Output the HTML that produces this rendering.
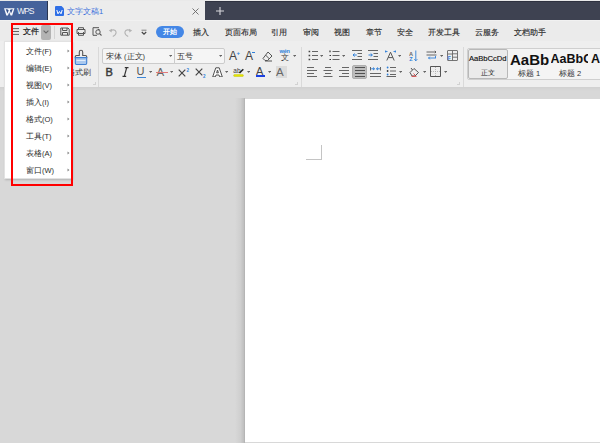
<!DOCTYPE html>
<html><head><meta charset="utf-8">
<style>
*{margin:0;padding:0;box-sizing:border-box}
html,body{width:600px;height:443px;overflow:hidden;background:#d8d8d8;font-family:"Liberation Sans",sans-serif;color:#333}
.a{position:absolute}
.t{position:absolute;white-space:nowrap;line-height:1}
.k{-webkit-text-stroke:0.15px currentColor}
</style></head><body>
<!-- title bar -->
<div class="a" style="left:0;top:0;width:600px;height:1px;background:#e9e9e9"></div>
<div class="a" style="left:0;top:1px;width:47px;height:19px;background:#45629b"></div>
<div class="a" style="left:47px;top:1px;width:158px;height:19px;background:#ececec"></div>
<div class="a" style="left:47px;top:1px;width:1px;height:19px;background:#2a3550"></div>
<div class="a" style="left:48px;top:1px;width:2px;height:19px;background:#f6f6f6"></div>
<div class="a" style="left:0;top:20px;width:600px;height:1px;background:#f1f1f1"></div>
<div class="a" style="left:205px;top:1px;width:395px;height:19px;background:#3e4251;border-top:1px solid #2f3240"></div>
<svg class="a" style="left:4px;top:7.5px" width="11" height="8" viewBox="0 0 11 8"><path d="M0 0.3H10.5L8.2 7.5H6.6L5.25 4.3L3.9 7.5H2.3Z" fill="#f4f6fb"/><path d="M1.7 1.3Q3.8 0.9 4.7 2.3L3.5 5.6Z M8.8 1.3Q6.7 0.9 5.8 2.3L7 5.6Z" fill="#36528c"/></svg>
<div class="t" style="left:17px;top:7.3px;font-size:8.6px;color:#f2f4f8;letter-spacing:-1px">WPS</div>
<svg class="a" style="left:55px;top:6px" width="9" height="10" viewBox="0 0 9 10"><path d="M1 0H6.5L9 2.5V9A1 1 0 0 1 8 10H1A1 1 0 0 1 0 9V1A1 1 0 0 1 1 0Z" fill="#2f6fe6"/><path d="M1.8 4L3 7.8L4.5 5.5L6 7.8L7.2 4" stroke="#fff" stroke-width="1" fill="none"/></svg>
<div class="t" style="left:67px;top:8px;font-size:7.6px;color:#376fdc">文字文稿1</div>
<svg class="a" style="left:192px;top:8px" width="7" height="7" viewBox="0 0 7 7"><path d="M0.5 0.5 L6.5 6.5 M6.5 0.5 L0.5 6.5" stroke="#666" stroke-width="0.9"/></svg>
<svg class="a" style="left:216px;top:7px" width="8" height="8" viewBox="0 0 8 8"><path d="M4 0 V8 M0 4 H8" stroke="#d8d8dc" stroke-width="1.1"/></svg>

<!-- ribbon tabs row -->
<div class="a" style="left:0;top:21px;width:600px;height:20px;background:#ebebeb"></div>
<!-- toolbar -->
<div class="a" style="left:0;top:41px;width:600px;height:46px;background:#eeeeee"></div>
<div class="a" style="left:0;top:87px;width:600px;height:4px;background:linear-gradient(#d0d0d0,#d8d8d8)"></div>


<!-- ribbon tab contents -->
<svg class="a" style="left:12px;top:28px" width="7" height="7" viewBox="0 0 7 7"><path d="M0 0.6H7M0 3.5H7M0 6.4H7" stroke="#555" stroke-width="0.9"/></svg>
<div class="t" style="left:22.5px;top:28.3px;font-size:7.8px;color:#1a1a1a;-webkit-text-stroke:0.2px #1a1a1a">文件</div>
<div class="a" style="left:41px;top:25px;width:10px;height:14.5px;background:#b3b3b3;border-radius:2px"></div>
<svg class="a" style="left:43px;top:30px" width="6" height="4" viewBox="0 0 6 4"><path d="M0.6 0.6L3 3L5.4 0.6" stroke="#6a6a6a" stroke-width="1.1" fill="none"/></svg>
<div class="a" style="left:54px;top:26px;width:1px;height:13px;background:#d4d4d4"></div>
<svg class="a" style="left:60px;top:27px" width="10" height="9" viewBox="0 0 10 9"><path d="M1 1H8L9.2 2.2V8.2H0.8V1Z M2.5 1V3.5H7V1 M2.5 8V5.5H7.5V8" stroke="#555" stroke-width="1" fill="none"/></svg>
<svg class="a" style="left:76px;top:27px" width="10" height="9" viewBox="0 0 10 9"><path d="M2.5 2.5V0.7H7.5V2.5 M1 2.5H9V6.5H1Z M2.5 5V8.3H7.5V5" stroke="#555" stroke-width="1" fill="none"/></svg>
<svg class="a" style="left:92px;top:27px" width="10" height="9" viewBox="0 0 10 9"><path d="M7 0.7H1V8.3H5 M6 2.5H7.5" stroke="#555" stroke-width="1" fill="none"/><circle cx="6" cy="5" r="2.2" stroke="#555" stroke-width="1" fill="none"/><path d="M7.6 6.6L9.5 8.5" stroke="#555" stroke-width="1.1"/></svg>
<svg class="a" style="left:108px;top:28px" width="10" height="9" viewBox="0 0 10 9"><path d="M2.5 2.8C4 1.5 7.5 1.3 8 3.8C8.4 5.8 6.8 7.6 4.8 8.5" stroke="#b4b4b4" stroke-width="1.1" fill="none"/><path d="M0.8 2.5L4 0.8L3.6 4.6Z" fill="#b4b4b4"/></svg>
<svg class="a" style="left:123px;top:28px" width="10" height="9" viewBox="0 0 10 9"><g transform="translate(10 0) scale(-1 1)"><path d="M2.5 2.8C4 1.5 7.5 1.3 8 3.8C8.4 5.8 6.8 7.6 4.8 8.5" stroke="#b4b4b4" stroke-width="1.1" fill="none"/><path d="M0.8 2.5L4 0.8L3.6 4.6Z" fill="#b4b4b4"/></g></svg>
<svg class="a" style="left:140px;top:29px" width="8" height="7" viewBox="0 0 8 7"><path d="M1.5 1.2H6.5" stroke="#777" stroke-width="0.9"/><path d="M1.8 3L4 5.2L6.2 3" stroke="#444" stroke-width="1.2" fill="none"/></svg>
<div class="a" style="left:156px;top:25.5px;width:28px;height:12.5px;background:#4487e6;border-radius:6.5px"></div>
<div class="t" style="left:162.8px;top:28.2px;font-size:7.4px;color:#fff;font-weight:bold">开始</div>
<div class="t k" style="left:193px;top:28.5px;font-size:8px;color:#2b2b2b">插入</div>
<div class="t k" style="left:225px;top:28.5px;font-size:8px;color:#2b2b2b">页面布局</div>
<div class="t k" style="left:271px;top:28.5px;font-size:8px;color:#2b2b2b">引用</div>
<div class="t k" style="left:303px;top:28.5px;font-size:8px;color:#2b2b2b">审阅</div>
<div class="t k" style="left:334px;top:28.5px;font-size:8px;color:#2b2b2b">视图</div>
<div class="t k" style="left:366px;top:28.5px;font-size:8px;color:#2b2b2b">章节</div>
<div class="t k" style="left:397px;top:28.5px;font-size:8px;color:#2b2b2b">安全</div>
<div class="t k" style="left:428px;top:28.5px;font-size:8px;color:#2b2b2b">开发工具</div>
<div class="t k" style="left:475px;top:28.5px;font-size:8px;color:#2b2b2b">云服务</div>
<div class="t k" style="left:514px;top:28.5px;font-size:8px;color:#2b2b2b">文档助手</div>


<!-- toolbar: clipboard -->
<svg class="a" style="left:74px;top:49px" width="14" height="17" viewBox="0 0 14 17"><path d="M5.3 6.5V3A1.7 1.7 0 0 1 8.7 3V6.5H11.5A1.2 1.2 0 0 1 12.7 7.7V8.6H1.3V7.7A1.2 1.2 0 0 1 2.5 6.5Z" stroke="#555" stroke-width="1.1" fill="none"/><path d="M1.3 8.6H12.7V14.3A1.2 1.2 0 0 1 11.5 15.5H2.5A1.2 1.2 0 0 1 1.3 14.3Z" fill="#a9c8ee" stroke="#3f7fd0" stroke-width="1.1"/><path d="M2.5 11.5H11.5" stroke="#e8f0fb" stroke-width="0.9"/></svg>
<div class="t" style="left:67px;top:69px;font-size:8px;color:#333">格式刷</div>
<div class="a" style="left:98px;top:47px;width:1px;height:40px;background:#d9d9d9"></div>
<div class="a" style="left:93px;top:82px;width:3px;height:3px;border-right:1px solid #d2d2d2;border-bottom:1px solid #d2d2d2"></div>
<!-- font group -->
<div class="a" style="left:102px;top:48px;width:73px;height:16px;border:1px solid #cbcbcb;border-radius:2px 0 0 2px;background:#f5f5f5"></div>
<div class="a" style="left:174px;top:48px;width:51px;height:16px;border:1px solid #cbcbcb;border-radius:0 2px 2px 0;background:#f5f5f5"></div>
<div class="t" style="left:106px;top:53px;font-size:7.5px;color:#333">宋体 (正文)</div>
<div class="t" style="left:177px;top:53px;font-size:7.8px;color:#333">五号</div>
<svg class="a" style="left:169px;top:55px" width="3.2" height="2.4" viewBox="0 0 4 3"><path d="M0 0H4L2 2.5Z" fill="#666"/></svg>
<svg class="a" style="left:219px;top:55px" width="3.2" height="2.4" viewBox="0 0 4 3"><path d="M0 0H4L2 2.5Z" fill="#666"/></svg>
<div class="t" style="left:229px;top:50px;font-size:12px;color:#444">A</div>
<div class="t" style="left:236.5px;top:49.5px;font-size:6px;color:#2f7fd8;font-weight:bold">+</div>
<div class="t" style="left:245px;top:50px;font-size:12px;color:#444">A</div>
<div class="a" style="left:252px;top:52px;width:3px;height:1px;background:#2f7fd8"></div>
<svg class="a" style="left:262px;top:51px" width="11" height="11" viewBox="0 0 11 11"><path d="M6 1L10 5L5.5 9.5H3L1 7.5Z M3.5 4L7.5 8 M3 10H10" stroke="#555" stroke-width="1" fill="none"/></svg>
<div class="t" style="left:280.5px;top:53.5px;font-size:7.8px;color:#3a3a3a">文</div>
<div class="t" style="left:279.5px;top:49px;font-size:5.6px;color:#2f7fd8;font-weight:bold;letter-spacing:-0.2px">wén</div>
<svg class="a" style="left:293px;top:55px" width="3.2" height="2.4" viewBox="0 0 4 3"><path d="M0 0H4L2 2.5Z" fill="#666"/></svg>
<!-- row2 -->
<div class="t" style="left:105.5px;top:66.5px;font-size:11px;color:#3a3a3a;-webkit-text-stroke:0.45px #3a3a3a">B</div>
<svg class="a" style="left:122px;top:67px" width="7" height="10" viewBox="0 0 7 10"><path d="M2.8 0.7H6.5M0.5 9.3H4.2M4.7 0.7L2.3 9.3" stroke="#333" stroke-width="1.2" fill="none"/></svg>
<div class="t" style="left:136.5px;top:66px;font-size:11px;color:#555">U</div>
<div class="a" style="left:137px;top:76.5px;width:9px;height:1px;background:#3c86d8"></div>
<svg class="a" style="left:149px;top:71px" width="3.2" height="2.4" viewBox="0 0 4 3"><path d="M0 0H4L2 2.5Z" fill="#666"/></svg>
<div class="t" style="left:156.5px;top:66.5px;font-size:11.5px;color:#666">A</div>
<div class="a" style="left:156px;top:72px;width:12px;height:1px;background:#e27a7a"></div>
<svg class="a" style="left:170px;top:71px" width="3.2" height="2.4" viewBox="0 0 4 3"><path d="M0 0H4L2 2.5Z" fill="#666"/></svg>
<svg class="a" style="left:178px;top:68px" width="12" height="9" viewBox="0 0 12 9"><path d="M0.7 1.7L7.3 8.3M7.3 1.7L0.7 8.3" stroke="#444" stroke-width="1.2"/><text x="8.5" y="4" font-size="4.5" fill="#2f7fd8" font-family="Liberation Sans" font-weight="bold">2</text></svg>
<svg class="a" style="left:195px;top:68px" width="12" height="10" viewBox="0 0 12 10"><path d="M0.7 0.7L7.3 7.3M7.3 0.7L0.7 7.3" stroke="#444" stroke-width="1.2"/><text x="8" y="9.5" font-size="4.5" fill="#2f7fd8" font-family="Liberation Sans" font-weight="bold">2</text></svg>
<svg class="a" style="left:212px;top:66.5px" width="11" height="10.5" viewBox="0 0 11 10.5"><path d="M0.7 9.8L3.8 0.8H7.2L10.3 9.8H7.6L7 8H4L3.4 9.8Z M4.6 5.8H6.4L5.5 3Z" fill="#fafafa" fill-rule="evenodd" stroke="#505050" stroke-width="1" stroke-linejoin="round"/></svg>
<svg class="a" style="left:225px;top:71px" width="3.2" height="2.4" viewBox="0 0 4 3"><path d="M0 0H4L2 2.5Z" fill="#666"/></svg>
<svg class="a" style="left:233px;top:66px" width="11" height="11" viewBox="0 0 11 11"><text x="0.3" y="7.3" font-size="6.5" fill="#3a3a3a" font-family="Liberation Sans">ab</text><path d="M6.5 7L10.3 3.2" stroke="#222" stroke-width="1.6"/><rect x="0.6" y="8.6" width="9.8" height="1.9" rx="0.9" fill="#e6e600" stroke="#b8b800" stroke-width="0.4"/></svg>
<svg class="a" style="left:247px;top:71px" width="3.2" height="2.4" viewBox="0 0 4 3"><path d="M0 0H4L2 2.5Z" fill="#666"/></svg>
<div class="t" style="left:256px;top:66px;font-size:11px;color:#444">A</div>
<div class="a" style="left:256px;top:75px;width:9px;height:2px;background:#1a3fe0"></div>
<svg class="a" style="left:268px;top:71px" width="3.2" height="2.4" viewBox="0 0 4 3"><path d="M0 0H4L2 2.5Z" fill="#666"/></svg>
<div class="a" style="left:275.5px;top:66px;width:11px;height:11.5px;background:#dcdcdc"></div>
<div class="t" style="left:276px;top:66.5px;font-size:11.5px;color:#666">A</div>
<div class="a" style="left:301px;top:47px;width:1px;height:40px;background:#d9d9d9"></div>
<div class="a" style="left:295px;top:82px;width:3px;height:3px;border-right:1px solid #d2d2d2;border-bottom:1px solid #d2d2d2"></div>


<!-- paragraph group -->
<svg class="a" style="left:307.5px;top:50px" width="11" height="11" viewBox="0 0 11 11"><path d="M0.6 1.5H2.2M0.6 5.5H2.2M0.6 9.5H2.2" stroke="#444" stroke-width="1.5"/><path d="M4 1.5H10M4 5.5H10M4 9.5H10" stroke="#555" stroke-width="0.9"/></svg>
<svg class="a" style="left:320px;top:55px" width="3.2" height="2.4" viewBox="0 0 4 3"><path d="M0 0H4L2 2.5Z" fill="#666"/></svg>
<svg class="a" style="left:329px;top:50px" width="11" height="11" viewBox="0 0 11 11"><path d="M1 0.5V2.3M0.5 5.5H2M0.5 9.5H2" stroke="#333" stroke-width="1.2"/><path d="M3.5 1.5H10.5M3.5 5.5H10.5M3.5 9.5H10.5" stroke="#555" stroke-width="0.9"/></svg>
<svg class="a" style="left:342px;top:55px" width="3.2" height="2.4" viewBox="0 0 4 3"><path d="M0 0H4L2 2.5Z" fill="#666"/></svg>
<svg class="a" style="left:352px;top:50px" width="10" height="11" viewBox="0 0 10 11"><path d="M0 0.5H10M5.5 3.5H10M5.5 6.5H10M0 9.5H10" stroke="#555" stroke-width="0.9"/><path d="M4.8 5H1M2.6 3.5L1 5L2.6 6.5" stroke="#2f7fd8" stroke-width="1" fill="none"/></svg>
<svg class="a" style="left:368px;top:50px" width="10" height="11" viewBox="0 0 10 11"><path d="M0 0.5H10M5.5 3.5H10M5.5 6.5H10M0 9.5H10" stroke="#555" stroke-width="0.9"/><path d="M0.5 5H4.3M2.7 3.5L4.3 5L2.7 6.5" stroke="#2f7fd8" stroke-width="1" fill="none"/></svg>
<svg class="a" style="left:384px;top:50px" width="13" height="11" viewBox="0 0 13 11"><path d="M2.8 10.5L6.5 2.2L10.2 10.5M4.2 7.6H8.8" stroke="#555" stroke-width="1" fill="none"/><path d="M1 1.5H3.5M2.2 0.4L1 1.5L2.2 2.6M12 1.5H9.5M10.8 0.4L12 1.5L10.8 2.6" stroke="#2f7fd8" stroke-width="0.9" fill="none"/></svg>
<svg class="a" style="left:398px;top:55px" width="3.2" height="2.4" viewBox="0 0 4 3"><path d="M0 0H4L2 2.5Z" fill="#666"/></svg>
<svg class="a" style="left:409px;top:50px" width="10" height="12" viewBox="0 0 10 12"><text x="0" y="5.6" font-size="5.6" fill="#666" font-family="Liberation Sans" font-weight="bold">A</text><text x="0.2" y="11" font-size="5.6" fill="#2f7fd8" font-family="Liberation Sans" font-weight="bold">Z</text><path d="M6.8 0.5V10.8 M5.3 9.2L6.8 10.8L8.3 9.2" stroke="#2f7fd8" stroke-width="0.9" fill="none"/></svg>
<svg class="a" style="left:426px;top:50px" width="11" height="11" viewBox="0 0 11 11"><path d="M0.5 2H8M0.5 5H10.5" stroke="#555" stroke-width="0.9"/><path d="M8 2H10M8.8 0.8L10 2L8.8 3.2" stroke="#555" stroke-width="0.9" fill="none"/><path d="M10 8H2.5M3.8 6.7L2.5 8L3.8 9.3 M9.5 8V6" stroke="#2f7fd8" stroke-width="0.9" fill="none"/></svg>
<svg class="a" style="left:440px;top:55px" width="3.2" height="2.4" viewBox="0 0 4 3"><path d="M0 0H4L2 2.5Z" fill="#666"/></svg>
<svg class="a" style="left:447px;top:50px" width="11" height="11" viewBox="0 0 11 11"><path d="M1 0.5H10A0.5 0.5 0 0 1 10.5 1V10A0.5 0.5 0 0 1 10 10.5H1A0.5 0.5 0 0 1 0.5 10V1A0.5 0.5 0 0 1 1 0.5Z M5.5 0.5V10.5 M5.5 3.8H10.5 M5.5 7.2H10.5 M0.5 4H5.5" stroke="#666" stroke-width="0.9" fill="none"/><text x="0.8" y="10" font-size="5" fill="#2f7fd8" font-family="Liberation Sans" font-weight="bold">F</text></svg>
<!-- row 2 -->
<svg class="a" style="left:307px;top:67px" width="11" height="10" viewBox="0 0 11 10"><path d="M0 0.5H7M0 3.5H10M0 6.5H7M0 9.5H10" stroke="#555" stroke-width="0.9"/></svg>
<svg class="a" style="left:323px;top:67px" width="11" height="10" viewBox="0 0 11 10"><path d="M2 0.5H8M0.5 3.5H9.5M2 6.5H8M0.5 9.5H9.5" stroke="#555" stroke-width="0.9"/></svg>
<svg class="a" style="left:339px;top:67px" width="11" height="10" viewBox="0 0 11 10"><path d="M3 0.5H10M0 3.5H10M3 6.5H10M0 9.5H10" stroke="#555" stroke-width="0.9"/></svg>
<div class="a" style="left:352px;top:64.5px;width:15px;height:14.5px;background:#bcbcbc;border-radius:2px;border:1px solid #adadad"></div>
<svg class="a" style="left:354.5px;top:67px" width="10" height="10" viewBox="0 0 10 10"><path d="M0 0.5H10M0 3.5H10M0 6.5H10M0 9.5H10" stroke="#444" stroke-width="0.9"/></svg>
<svg class="a" style="left:370px;top:66.5px" width="11" height="10" viewBox="0 0 11 10"><path d="M0.5 0V3.5M10.5 0V3.5" stroke="#555" stroke-width="0.9"/><path d="M0 6.5H11M0 9.5H11" stroke="#555" stroke-width="0.9"/><path d="M1.2 1.8H4.5M3 0.5L4.5 1.8L3 3.1 M9.8 1.8H6.5M8 0.5L6.5 1.8L8 3.1" stroke="#2f7fd8" stroke-width="1" fill="none"/></svg>
<svg class="a" style="left:386px;top:66px" width="11" height="11" viewBox="0 0 11 11"><path d="M4 1.5H10M4 5H10M4 8.5H10 M0.5 10.5H10" stroke="#555" stroke-width="0.9"/><circle cx="1.6" cy="1.5" r="0.9" fill="#2f7fd8"/><circle cx="1.6" cy="5" r="0.9" fill="#333"/><circle cx="1.6" cy="8.5" r="0.9" fill="#2f7fd8"/></svg>
<svg class="a" style="left:399px;top:71px" width="3.2" height="2.4" viewBox="0 0 4 3"><path d="M0 0H4L2 2.5Z" fill="#666"/></svg>
<svg class="a" style="left:408.5px;top:66.5px" width="11" height="10" viewBox="0 0 11 10"><path d="M1 5.5L5 1.5L9.5 5.5L6 9H3Z" stroke="#555" stroke-width="1" fill="none" stroke-linejoin="round"/><path d="M3.5 3L2 1" stroke="#555" stroke-width="1"/><path d="M2.5 9.3H7.5" stroke="#e04848" stroke-width="1"/><path d="M4.5 6.5L6 8" stroke="#e04848" stroke-width="0.9"/></svg>
<svg class="a" style="left:423px;top:71px" width="3.2" height="2.4" viewBox="0 0 4 3"><path d="M0 0H4L2 2.5Z" fill="#666"/></svg>
<svg class="a" style="left:430px;top:66px" width="11" height="11" viewBox="0 0 11 11"><path d="M0.5 0.5H10.5V10.5H0.5Z" stroke="#555" stroke-width="1" fill="none"/><path d="M5.5 1V10M1 5.5H10" stroke="#aaa" stroke-width="0.8" stroke-dasharray="1 1"/></svg>
<svg class="a" style="left:444px;top:71px" width="3.2" height="2.4" viewBox="0 0 4 3"><path d="M0 0H4L2 2.5Z" fill="#666"/></svg>
<div class="a" style="left:463px;top:47px;width:1px;height:40px;background:#d9d9d9"></div>
<div class="a" style="left:457px;top:82px;width:3px;height:3px;border-right:1px solid #d2d2d2;border-bottom:1px solid #d2d2d2"></div>
<!-- styles -->
<div class="a" style="left:467px;top:48px;width:140px;height:32px;border:1px solid #cfcfcf;border-radius:2px;background:#f4f4f4"></div>
<div class="a" style="left:468px;top:49px;width:39.5px;height:29.5px;border:1px solid #b8b8b8;border-radius:2px;background:#ebebeb"></div>
<div class="t" style="left:469px;top:55px;font-size:7.6px;color:#111;-webkit-text-stroke:0.15px #111">AaBbCcDd</div>
<div class="t" style="left:480.5px;top:69.3px;font-size:7.4px;color:#222">正文</div>
<div class="t" style="left:510px;top:52px;font-size:15px;color:#111;font-weight:bold">AaBb</div>
<div class="t" style="left:518px;top:69.5px;font-size:7.5px;color:#333">标题 1</div>
<div style="position:absolute;left:550.5px;top:52.5px;width:37px;height:14px;overflow:hidden"><div class="t" style="left:0;top:0;font-size:12.5px;color:#111;font-weight:bold">AaBbC</div></div>
<div class="t" style="left:559px;top:69.5px;font-size:7.5px;color:#333">标题 2</div>
<div class="t" style="left:591px;top:52.5px;font-size:12.5px;color:#111;font-weight:bold">A</div>

<!-- doc page -->
<div class="a" style="left:235px;top:98px;width:10px;height:345px;background:linear-gradient(to right,rgba(0,0,0,0),rgba(0,0,0,0.045) 55%,rgba(0,0,0,0.11) 85%,rgba(0,0,0,0.19))"></div>
<div class="a" style="left:245px;top:98.5px;width:355px;height:343px;background:#fff"></div>
<div class="a" style="left:306px;top:145px;width:16px;height:15px;border-right:1px solid #c4c4c4;border-bottom:1px solid #c4c4c4"></div>


<!-- menu -->
<div class="a" style="left:4px;top:41px;width:68px;height:138px;background:#fff;border:1px solid #e2e2e2;box-shadow:1px 1px 2px rgba(0,0,0,0.18)"></div>
<div class="t" style="left:26px;top:47.8px;font-size:7.5px;color:#2a2a2a">文件(F)</div>
<div class="t" style="left:26px;top:64.8px;font-size:7.5px;color:#2a2a2a">编辑(E)</div>
<div class="t" style="left:26px;top:81.8px;font-size:7.5px;color:#2a2a2a">视图(V)</div>
<div class="t" style="left:26px;top:98.8px;font-size:7.5px;color:#2a2a2a">插入(I)</div>
<div class="t" style="left:26px;top:115.8px;font-size:7.5px;color:#2a2a2a">格式(O)</div>
<div class="t" style="left:26px;top:132.8px;font-size:7.5px;color:#2a2a2a">工具(T)</div>
<div class="t" style="left:26px;top:149.8px;font-size:7.5px;color:#2a2a2a">表格(A)</div>
<div class="t" style="left:26px;top:166.8px;font-size:7.5px;color:#2a2a2a">窗口(W)</div>
<svg class="a" style="left:67px;top:49px" width="3" height="124" viewBox="0 0 3 124"><path d="M0.5 0.5L2.5 2L0.5 3.5Z M0.5 17.5L2.5 19L0.5 20.5Z M0.5 34.5L2.5 36L0.5 37.5Z M0.5 51.5L2.5 53L0.5 54.5Z M0.5 68.5L2.5 70L0.5 71.5Z M0.5 85.5L2.5 87L0.5 88.5Z M0.5 102.5L2.5 104L0.5 105.5Z M0.5 119.5L2.5 121L0.5 122.5Z" fill="#888"/></svg>
<!-- red rect -->
<div class="a" style="left:11px;top:23px;width:62px;height:163px;border:2px solid #f00"></div>

</body></html>
